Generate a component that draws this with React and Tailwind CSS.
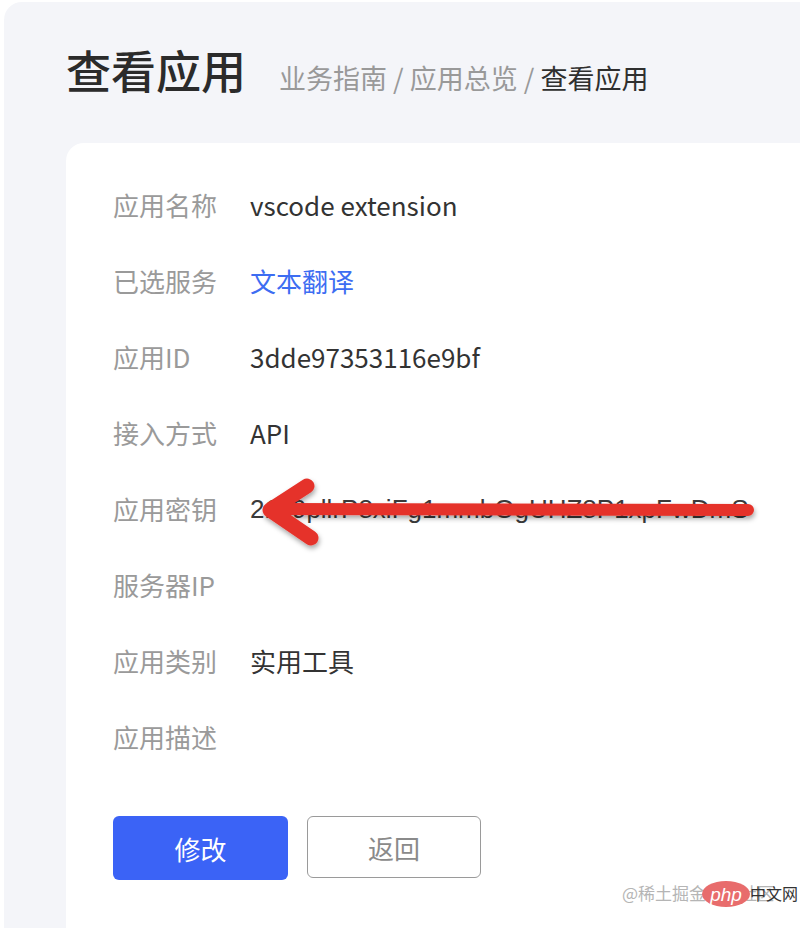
import React from "react";

const rows = [
  { label: "应用名称", value: "vscode extension" },
  { label: "已选服务", value: "文本翻译", blue: true },
  { label: "应用ID", value: "3dde97353116e9bf" },
  { label: "接入方式", value: "API" },
  { label: "应用密钥", value: "21c9pllrP8xiFg1mmbOgUHZ8P1xpFwDmS", key: true },
  { label: "服务器IP", value: "" },
  { label: "应用类别", value: "实用工具" },
  { label: "应用描述", value: "" },
];

export default function App() {
  return (
    <div
      className="relative w-[800px] h-[928px] bg-white overflow-hidden"
      style={{ fontFamily: '"Noto Sans CJK SC", "Noto Sans", sans-serif' }}
    >
      <div className="ml-[4px] mt-[2px] h-[926px] bg-[#f4f5f9] rounded-tl-[18px] pl-[62px] flex flex-col">
        <div className="h-[141px] flex items-baseline pt-[45px]">
          <h1 className="text-[45px] leading-none font-medium text-[#2b2b2b]">查看应用</h1>
          <div className="ml-[33px] text-[27px] leading-none text-[#999999]">
            业务指南 / 应用总览 / <span className="text-[#2f2f2f]">查看应用</span>
          </div>
        </div>
        <div className="flex-1 bg-white rounded-tl-[18px] pl-[47px] pt-[24px]">
          {rows.map((r) => (
            <div key={r.label} className="h-[76px] flex items-center">
              <div className="w-[137px] text-[26px] text-[#9a9a9a] leading-none">{r.label}</div>
              {r.key ? (
                <div
                  className="text-[26px] leading-none text-[#3a3a3a]"
                  style={{ fontFamily: '"Liberation Sans", Arial, sans-serif' }}
                >
                  {r.value}
                </div>
              ) : (
                <div
                  className={
                    r.blue
                      ? "text-[26px] leading-none text-[#3d6df2]"
                      : "text-[26px] leading-none text-[#333333]"
                  }
                >
                  {r.value}
                </div>
              )}
            </div>
          ))}
          <div className="flex gap-[19px] mt-[41px]">
            <button className="w-[175px] h-[64px] rounded-[6px] bg-[#3b63f6] text-white text-[26px]">
              修改
            </button>
            <button className="w-[174px] h-[62px] rounded-[6px] border-[1.5px] border-[#9a9a9a] bg-white text-[#8a8a8a] text-[26px]">
              返回
            </button>
          </div>
        </div>
      </div>

      <svg
        className="absolute top-0 left-0 pointer-events-none"
        width="800"
        height="928"
        viewBox="0 0 800 928"
      >
        <defs>
          <filter id="sh" x="-10%" y="-50%" width="120%" height="200%">
            <feDropShadow dx="1" dy="3" stdDeviation="2.5" floodColor="#000" floodOpacity="0.35" />
          </filter>
        </defs>
        <g filter="url(#sh)" stroke="#e5332b" strokeLinecap="round" strokeLinejoin="round" fill="none">
          <path d="M748 510 L278 509" strokeWidth="12" />
          <path d="M307 486 L270 510 L311 538" strokeWidth="15" />
        </g>
      </svg>

      <div className="absolute left-[622px] top-[884px] flex items-center text-[17px] leading-none text-[#b5b5b5]">
        <span>@稀土掘金技术社区</span>
      </div>
      <div
        className="absolute left-[702px] top-[881px] w-[48px] h-[26px] rounded-[50%] bg-[#e86c6c] flex items-center justify-center text-white text-[19px] italic leading-none"
        style={{ fontFamily: '"Liberation Sans", Arial, sans-serif' }}
      >
        php
      </div>
      <div className="absolute left-[750px] top-[885px] text-[16px] leading-none text-[#333333]">中文网</div>
    </div>
  );
}
